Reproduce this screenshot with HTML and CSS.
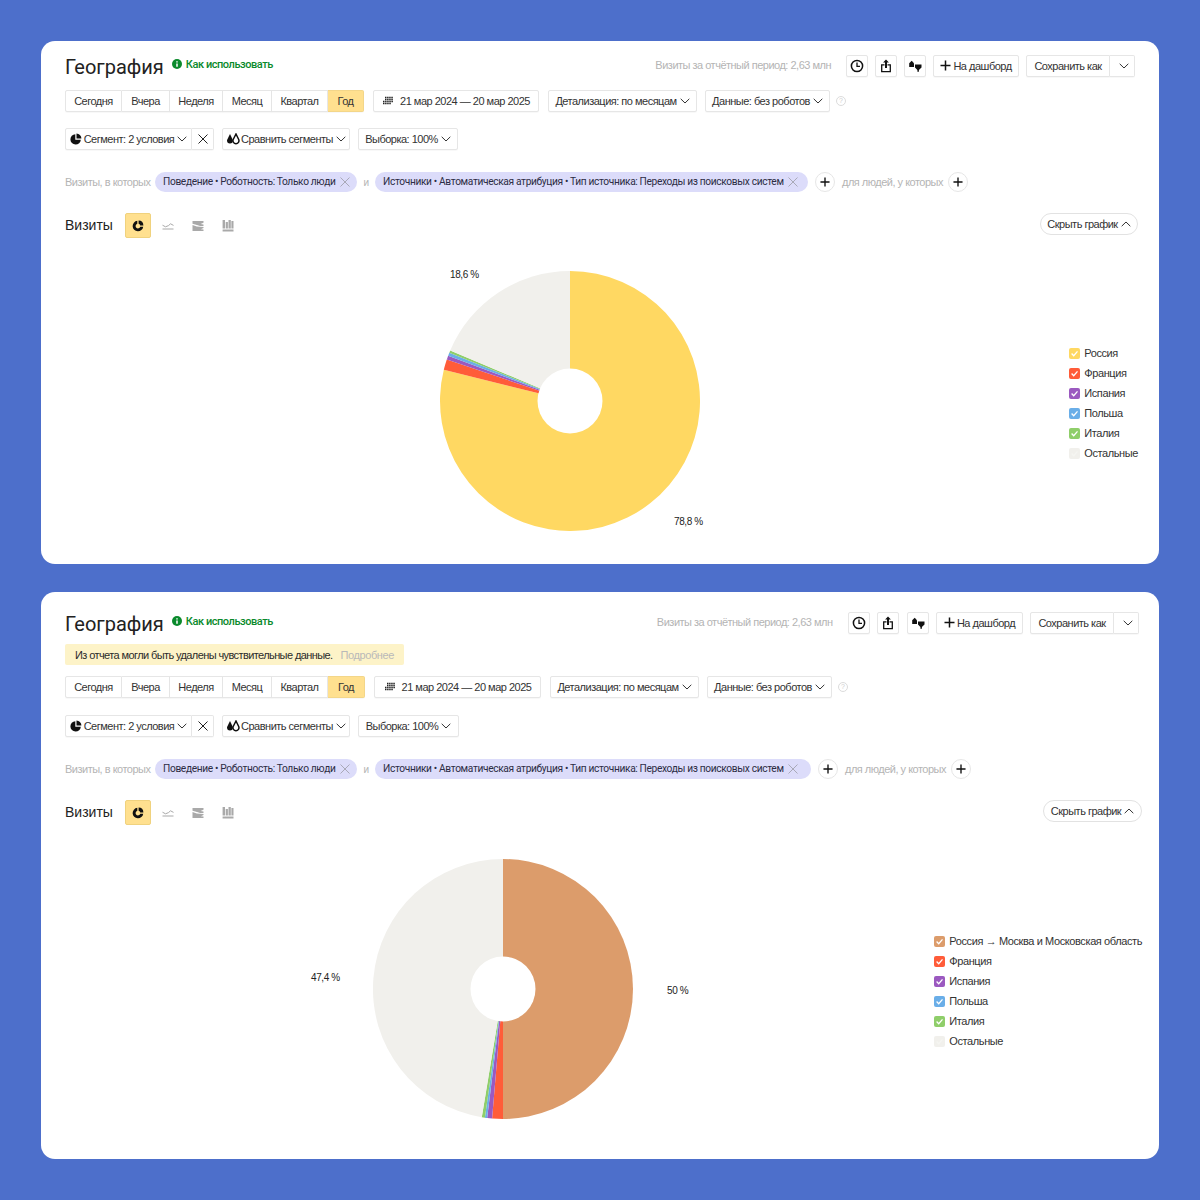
FILE: index.html
```html
<!DOCTYPE html>
<html lang="ru">
<head>
<meta charset="utf-8">
<title>География</title>
<link rel="stylesheet" href="styles.css">
</head>
<body>
<svg class="defs" width="0" height="0" aria-hidden="true">
  <defs>
    <symbol id="i-chev" viewBox="0 0 10 6"><path d="M.7.8 5 5 9.3.8" fill="none" stroke="currentColor" stroke-width="1"/></symbol>
    <symbol id="i-chevup" viewBox="0 0 10 6"><path d="M.7 5.2 5 1l4.3 4.2" fill="none" stroke="currentColor" stroke-width="1"/></symbol>
    <symbol id="i-x" viewBox="0 0 10 10"><path d="M.5.5l9 9M9.5.5l-9 9" fill="none" stroke="currentColor" stroke-width="1"/></symbol>
    <symbol id="i-plus" viewBox="0 0 11 11"><path d="M5.5.5v10M.5 5.5h10" fill="none" stroke="currentColor" stroke-width="1.5"/></symbol>
    <symbol id="i-clock" viewBox="0 0 14 14"><circle cx="7" cy="7" r="5.6" fill="none" stroke="currentColor" stroke-width="1.5"/><path d="M7 3.6V7.3h3" fill="none" stroke="currentColor" stroke-width="1.3"/></symbol>
    <symbol id="i-share" viewBox="0 0 14 14"><path d="M7 .6 9.9 3.6H8V9H6V3.6H4.100z" fill="currentColor"/><path d="M5.500 5.800H2.700v6.900h8.600V5.800H8.500" fill="none" stroke="currentColor" stroke-width="1.300"/></symbol>
    <symbol id="i-cmp" viewBox="0 0 14 14"><path d="M3.700 1.800 6 4.200V8H1.200V4.200z" fill="currentColor"/><path d="M7 5.500h6.500v3L10.900 11v1.800H9.400V11L7 8.500z" fill="currentColor"/></symbol>
    <symbol id="i-cal" viewBox="0 0 12 10"><path d="M3 1.500h8M3 3.500h8M1 5.500h10M1 7.500h8" stroke="currentColor" stroke-width="1.500" stroke-dasharray="1.500 .6" fill="none"/></symbol>
    <symbol id="i-seg" viewBox="0 0 12 12"><path d="M5.300 1.200v5.500h5.500A5.200 5.200 0 1 1 5.300 1.200z" fill="currentColor"/><path d="M6.500.6a5 5 0 0 1 4.900 4.900H6.500z" fill="currentColor"/></symbol>
    <symbol id="i-drops" viewBox="0 0 14 12"><path d="M4 1 6.600 6.500a2.900 2.900 0 1 1-5.300 0z" fill="currentColor"/><path d="M10 1l2.700 5.500a3 3 0 1 1-5.500 0z" fill="none" stroke="currentColor" stroke-width="1.500"/></symbol>
    <symbol id="i-pie" viewBox="0 0 12 12"><path d="M5.300.8v2.900a2.400 2.400 0 1 0 3 3h2.900A5.300 5.300 0 1 1 5.300.800z" fill="currentColor"/><path d="M6.600.6a5 5 0 0 1 4.800 4.800H8.200A2.200 2.200 0 0 0 6.600 3.800z" fill="currentColor"/></symbol>
    <symbol id="i-line" viewBox="0 0 12 8"><path d="M.5 3.200 3.500 4.800 6.500 3.600 8.500 1.800 11.500 3.400" fill="none" stroke="currentColor" stroke-width="1"/><path d="M.5 7h11" stroke="currentColor" stroke-width="1"/></symbol>
    <symbol id="i-area" viewBox="0 0 12 11"><path d="M.5.600h11v1.600L8.500 3.400l3 .7v1.500H8l-3-1.200L.5 3.200zM.5 4.500l4.300 1.500 6.700.4v1.200L8.800 8.800l2.700.3v1.400H.5z" fill="currentColor"/></symbol>
    <symbol id="i-bars" viewBox="0 0 12 12"><path d="M.6 0h2.400v8.500H.6zM3.700 2h2.200v6.500H3.700zM6.500 0h2.300v8.500H6.500zM9.400 1h2.100v7.500H9.400zM.6 9.500h10.900v2H.6z" fill="currentColor"/></symbol>
    <symbol id="i-tick" viewBox="0 0 11 11"><path d="M2.600 5.500 4.700 7.700 8.500 3.300" fill="none" stroke="currentColor" stroke-width="1.300"/></symbol>
  </defs>
</svg>

<main class="page">
  <section class="card card-a">
    <header class="head">
      <h1 class="title">География</h1>
      <a class="how"><svg class="how-ic" viewBox="0 0 10 10"><circle cx="5" cy="5" r="5" fill="#0a8a2c"/><path d="M5 2.200v1.300M5 4.500v3.300" stroke="#fff" stroke-width="1.500"/></svg>Как использовать</a>
      <div class="head-right">
        <span class="stat">Визиты за отчётный период: 2,63 млн</span>
        <button class="btn sq"><svg class="ic14"><use href="#i-clock"/></svg></button>
        <button class="btn sq"><svg class="ic14"><use href="#i-share"/></svg></button>
        <button class="btn sq"><svg class="ic14"><use href="#i-cmp"/></svg></button>
        <button class="btn dash"><svg class="ic11"><use href="#i-plus"/></svg>На дашборд</button>
        <div class="group save"><button class="btn save-main">Сохранить как</button><button class="btn save-more"><svg class="chev"><use href="#i-chev"/></svg></button></div>
      </div>
    </header>

    <div class="row row-period">
      <div class="group periods">
        <button class="btn p1">Сегодня</button><button class="btn p2">Вчера</button><button class="btn p3">Неделя</button><button class="btn p4">Месяц</button><button class="btn p5">Квартал</button><button class="btn p6 on">Год</button>
      </div>
      <button class="btn date"><svg class="cal"><use href="#i-cal"/></svg>21 мар 2024 — 20 мар 2025</button>
      <button class="btn detail">Детализация: по месяцам<svg class="chev"><use href="#i-chev"/></svg></button>
      <button class="btn data">Данные: без роботов<svg class="chev"><use href="#i-chev"/></svg></button>
      <span class="help">?</span>
    </div>

    <div class="row row-seg">
      <div class="group">
        <button class="btn seg"><svg class="ic12"><use href="#i-seg"/></svg>Сегмент: 2 условия<svg class="chev"><use href="#i-chev"/></svg></button><button class="btn seg-x"><svg class="ic10"><use href="#i-x"/></svg></button>
      </div>
      <button class="btn cmp"><svg class="drops"><use href="#i-drops"/></svg>Сравнить сегменты<svg class="chev"><use href="#i-chev"/></svg></button>
      <button class="btn sample">Выборка: 100%<svg class="chev"><use href="#i-chev"/></svg></button>
    </div>

    <div class="row row-pills">
      <span class="muted l1">Визиты, в которых</span>
      <span class="pill pill1">Поведение • Роботность: Только люди<svg class="ic10 px"><use href="#i-x"/></svg></span>
      <span class="muted and">и</span>
      <span class="pill pill2">Источники • Автоматическая атрибуция • Тип источника: Переходы из поисковых систем<svg class="ic10 px"><use href="#i-x"/></svg></span>
      <button class="round"><svg class="ic10b"><use href="#i-plus"/></svg></button>
      <span class="muted l2">для людей, у которых</span>
      <button class="round"><svg class="ic10b"><use href="#i-plus"/></svg></button>
    </div>

    <div class="row row-chart-head">
      <h2 class="sub">Визиты</h2>
      <button class="type on"><svg class="ic12"><use href="#i-pie"/></svg></button>
      <span class="type"><svg class="ic12"><use href="#i-line"/></svg></span>
      <span class="type"><svg class="ic12"><use href="#i-area"/></svg></span>
      <span class="type"><svg class="ic12"><use href="#i-bars"/></svg></span>
      <button class="hide">Скрыть график<svg class="chev"><use href="#i-chevup"/></svg></button>
    </div>

    <div class="chart">
      <div class="pie">
        <svg class="pie-svg" viewBox="0 0 260 260">
          <path fill="#ffd862" d="M130 130V0A130 130 0 1 1 3.81 98.77Z"/>
          <path fill="#ff5c39" d="M130 130L3.81 98.77A130 130 0 0 1 6.79 88.53Z"/>
          <path fill="#9b59c0" d="M130 130L6.79 88.53A130 130 0 0 1 8.15 84.68Z"/>
          <path fill="#6aaee8" d="M130 130L8.15 84.68A130 130 0 0 1 9.3 81.72Z"/>
          <path fill="#8fce6a" d="M130 130L9.3 81.72A130 130 0 0 1 10.24 79.42Z"/>
          <path fill="#f1f0ec" d="M130 130L10.24 79.42A130 130 0 0 1 130 0Z"/>
          <circle cx="130" cy="130" r="32.5" fill="#fff"/>
        </svg>
        <span class="val a-grey">18,6 %</span>
        <span class="val a-yellow">78,8 %</span>
      </div>
      <ul class="legend">
        <li><span class="sw c-yellow"><svg><use href="#i-tick"/></svg></span>Россия</li>
        <li><span class="sw c-red"><svg><use href="#i-tick"/></svg></span>Франция</li>
        <li><span class="sw c-purple"><svg><use href="#i-tick"/></svg></span>Испания</li>
        <li><span class="sw c-blue"><svg><use href="#i-tick"/></svg></span>Польша</li>
        <li><span class="sw c-green"><svg><use href="#i-tick"/></svg></span>Италия</li>
        <li><span class="sw c-grey"><svg><use href="#i-tick"/></svg></span>Остальные</li>
      </ul>
    </div>
  </section>

  <section class="card card-b">
    <header class="head">
      <h1 class="title">География</h1>
      <a class="how"><svg class="how-ic" viewBox="0 0 10 10"><circle cx="5" cy="5" r="5" fill="#0a8a2c"/><path d="M5 2.200v1.300M5 4.500v3.300" stroke="#fff" stroke-width="1.500"/></svg>Как использовать</a>
      <div class="head-right">
        <span class="stat">Визиты за отчётный период: 2,63 млн</span>
        <button class="btn sq"><svg class="ic14"><use href="#i-clock"/></svg></button>
        <button class="btn sq"><svg class="ic14"><use href="#i-share"/></svg></button>
        <button class="btn sq"><svg class="ic14"><use href="#i-cmp"/></svg></button>
        <button class="btn dash"><svg class="ic11"><use href="#i-plus"/></svg>На дашборд</button>
        <div class="group save"><button class="btn save-main">Сохранить как</button><button class="btn save-more"><svg class="chev"><use href="#i-chev"/></svg></button></div>
      </div>
    </header>

    <p class="notice">Из отчета могли быть удалены чувствительные данные.<a class="more">Подробнее</a></p>

    <div class="row row-period">
      <div class="group periods">
        <button class="btn p1">Сегодня</button><button class="btn p2">Вчера</button><button class="btn p3">Неделя</button><button class="btn p4">Месяц</button><button class="btn p5">Квартал</button><button class="btn p6 on">Год</button>
      </div>
      <button class="btn date"><svg class="cal"><use href="#i-cal"/></svg>21 мар 2024 — 20 мар 2025</button>
      <button class="btn detail">Детализация: по месяцам<svg class="chev"><use href="#i-chev"/></svg></button>
      <button class="btn data">Данные: без роботов<svg class="chev"><use href="#i-chev"/></svg></button>
      <span class="help">?</span>
    </div>

    <div class="row row-seg">
      <div class="group">
        <button class="btn seg"><svg class="ic12"><use href="#i-seg"/></svg>Сегмент: 2 условия<svg class="chev"><use href="#i-chev"/></svg></button><button class="btn seg-x"><svg class="ic10"><use href="#i-x"/></svg></button>
      </div>
      <button class="btn cmp"><svg class="drops"><use href="#i-drops"/></svg>Сравнить сегменты<svg class="chev"><use href="#i-chev"/></svg></button>
      <button class="btn sample">Выборка: 100%<svg class="chev"><use href="#i-chev"/></svg></button>
    </div>

    <div class="row row-pills">
      <span class="muted l1">Визиты, в которых</span>
      <span class="pill pill1">Поведение • Роботность: Только люди<svg class="ic10 px"><use href="#i-x"/></svg></span>
      <span class="muted and">и</span>
      <span class="pill pill2">Источники • Автоматическая атрибуция • Тип источника: Переходы из поисковых систем<svg class="ic10 px"><use href="#i-x"/></svg></span>
      <button class="round"><svg class="ic10b"><use href="#i-plus"/></svg></button>
      <span class="muted l2">для людей, у которых</span>
      <button class="round"><svg class="ic10b"><use href="#i-plus"/></svg></button>
    </div>

    <div class="row row-chart-head">
      <h2 class="sub">Визиты</h2>
      <button class="type on"><svg class="ic12"><use href="#i-pie"/></svg></button>
      <span class="type"><svg class="ic12"><use href="#i-line"/></svg></span>
      <span class="type"><svg class="ic12"><use href="#i-area"/></svg></span>
      <span class="type"><svg class="ic12"><use href="#i-bars"/></svg></span>
      <button class="hide">Скрыть график<svg class="chev"><use href="#i-chevup"/></svg></button>
    </div>

    <div class="chart">
      <div class="pie">
        <svg class="pie-svg" viewBox="0 0 260 260">
          <path fill="#dc9c6b" d="M130 130V0A130 130 0 0 1 130 260Z"/>
          <path fill="#ff5c39" d="M130 130V260A130 130 0 0 1 119.12 259.54Z"/>
          <path fill="#9b59c0" d="M130 130L119.12 259.54A130 130 0 0 1 114.16 259.03Z"/>
          <path fill="#6aaee8" d="M130 130L114.16 259.03A130 130 0 0 1 111.91 258.74Z"/>
          <path fill="#8fce6a" d="M130 130L111.91 258.74A130 130 0 0 1 108.77 258.26Z"/>
          <path fill="#f1f0ec" d="M130 130L108.77 258.26A130 130 0 0 1 130 0Z"/>
          <circle cx="130" cy="130" r="32.5" fill="#fff"/>
        </svg>
        <span class="val b-grey">47,4 %</span>
        <span class="val b-orange">50 %</span>
      </div>
      <ul class="legend">
        <li><span class="sw c-orange"><svg><use href="#i-tick"/></svg></span>Россия → Москва и Московская область</li>
        <li><span class="sw c-red"><svg><use href="#i-tick"/></svg></span>Франция</li>
        <li><span class="sw c-purple"><svg><use href="#i-tick"/></svg></span>Испания</li>
        <li><span class="sw c-blue"><svg><use href="#i-tick"/></svg></span>Польша</li>
        <li><span class="sw c-green"><svg><use href="#i-tick"/></svg></span>Италия</li>
        <li><span class="sw c-grey"><svg><use href="#i-tick"/></svg></span>Остальные</li>
      </ul>
    </div>
  </section>
</main>
</body>
</html>
```

FILE: styles.css
```css
* { box-sizing: border-box; }
html, body { margin: 0; padding: 0; }
body {
  background: #4d6fcb;
  font-family: "Liberation Sans", Arial, sans-serif;
  font-size: 11px;
  letter-spacing: -0.5px;
  color: #2b2b2b;
}
.defs { position: absolute; }
.page {
  display: flex;
  flex-direction: column;
  gap: 28px;
  padding: 41px 41px 0;
}
.card {
  background: #fff;
  border-radius: 14px;
  padding: 0 0 0 24px;
}
.card-a { height: 523px; padding-top: 14px; }
.card-b { height: 567px; padding-top: 20px; }

/* header */
.head { display: flex; align-items: center; height: 22px; padding-right: 24px; }
.card-b .head { padding-right: 20px; }
.title {
  margin: 0;
  font: 400 20px/26px Roboto, sans-serif;
  letter-spacing: 0;
  color: #222;
  position: relative;
  top: 1px;
}
.how { display: flex; align-items: center; margin-left: 8px; color: #0a8a2c; font: 500 11px/14px Roboto, sans-serif; letter-spacing: -0.45px; position: relative; top: -1px; }
.how-ic { width: 10px; height: 10px; margin-right: 4px; position: relative; top: -1px; }
.head-right { display: flex; align-items: center; margin-left: auto; }
.stat { color: #b4b4b4; margin-right: 15px; position: relative; top: -1px; }
.btn {
  display: inline-flex;
  align-items: center;
  justify-content: center;
  height: 22px;
  padding: 0 0 1px;
  margin: 0;
  background: #fff;
  border: 1px solid #e6e6e6;
  border-radius: 2px;
  font: inherit;
  letter-spacing: inherit;
  color: #333;
  box-shadow: 0 1px 1px rgba(0,0,0,.03);
  white-space: nowrap;
}
.sq { width: 22px; margin-right: 7px; }
.card-b .sq { margin-right: 7.5px; }
.dash { width: 86px; margin-right: 7px; }
.card-b .dash { width: 87px; }
.group { display: inline-flex; }
.group .btn { border-radius: 0; border-left-width: 0; }
.group .btn:first-child { border-left-width: 1px; border-radius: 2px 0 0 2px; }
.group .btn:last-child { border-radius: 0 2px 2px 0; }
.save-main { width: 84px; }
.save-more { width: 25px; }
.dash svg { margin-right: 2px; }

/* rows */
.row { display: flex; align-items: center; }
.row-period { height: 22px; margin-top: 13px; }
.row-seg { height: 22px; margin-top: 16px; }
.row-pills { height: 20px; margin-top: 22px; }
.row-chart-head { height: 25px; margin-top: 21px; padding-right: 21px; }
.card-b .row-period { margin-top: 11px; }
.card-b .row-seg { margin-top: 17px; }
.card-b .row-chart-head { padding-right: 17px; }

.notice {
  display: inline-flex;
  align-items: center;
  height: 21px;
  margin: 10px 0 0;
  padding: 0 10px;
  background: #fdf3c8;
  border-radius: 2px;
  color: #2b2b2b;
  letter-spacing: -0.6px;
}
.more { margin-left: 8px; color: #b9b9b9; letter-spacing: -0.4px; }

.p1 { width: 57px; }
.p2 { width: 48px; }
.p3 { width: 53px; }
.p4 { width: 49px; }
.p5 { width: 56px; }
.p6 { width: 36px; }
.btn.on { background: #ffe08f; border-color: #f3d689; }
.date { width: 166px; margin-left: 9px; }
.detail { width: 149px; margin-left: 9px; }
.data { width: 125px; margin-left: 8px; }
.card-b .p6 { width: 37px; }
.card-b .date { width: 167px; }
.chev { width: 10px; height: 6px; margin-left: 3px; flex: none; }
.cal { width: 12px; height: 10px; margin-right: 6px; color: #222; }
.help {
  width: 10px; height: 10px;
  margin-left: 6px;
  border: 1px solid #dcdcdc;
  border-radius: 50%;
  color: #cfcfcf;
  font-size: 7px;
  line-height: 8px;
  text-align: center;
  letter-spacing: 0;
}
.seg { width: 127px; }
.seg-x { width: 22px; }
.seg-x svg { color: #222; }
.ic12 { width: 12px; height: 12px; flex: none; color: #111; }
.ic14 { width: 14px; height: 14px; color: #111; }
.ic11 { width: 11px; height: 11px; color: #111; }
.ic10 { width: 10px; height: 10px; }
.ic10b { width: 10px; height: 10px; color: #111; }
.seg .ic12 { margin-right: 2px; }
.drops { width: 14px; height: 12px; margin-right: 1px; color: #111; }
.cmp { width: 128px; margin-left: 8px; }
.sample { width: 100px; margin-left: 8px; }
.card-b .sample { width: 101px; }

/* pills */
.muted { color: #b4b4b4; white-space: nowrap; }
.l1 { width: 90px; }
.and { width: 18px; text-align: center; font-size: 10px; }
.pill {
  display: inline-flex;
  align-items: center;
  height: 20px;
  padding: 0 0 0 8px;
  background: #dcdcfa;
  border-radius: 10px;
  font: 400 10.2px/20px Roboto, sans-serif;
  letter-spacing: -0.35px;
  color: #2c2c44;
  white-space: nowrap;
}
.pill1 { width: 202px; }
.pill2 { width: 433px; }
.card-b .pill2 { width: 436px; }
.px { margin-left: 4px; color: #a9a9b8; flex: none; }
.round {
  display: inline-flex;
  align-items: center;
  justify-content: center;
  width: 20px; height: 20px;
  padding: 0;
  background: #fff;
  border: 1px solid #e6e6e6;
  border-radius: 50%;
  margin-left: 7px;
  flex: none;
}
.l2 { margin-left: 7px; width: 99px; }
.l2 + .round { margin-left: 7px; }

/* chart head */
.sub { margin: 0; width: 60px; font: 400 14px/25px "Liberation Sans", sans-serif; color: #222; letter-spacing: 0; }
.type {
  display: inline-flex;
  align-items: center;
  justify-content: center;
  width: 26px; height: 25px;
  margin-right: 4px;
  padding: 0;
  background: none;
  border: 0;
  color: #aaa;
}
.type .ic12 { color: #a9a9a9; }
.type.on { background: #ffe08f; border: 1px solid #f0d27e; border-radius: 2px; }
.type.on .ic12 { color: #111; }
.hide {
  display: inline-flex;
  align-items: center;
  justify-content: center;
  margin-left: auto;
  align-self: flex-start;
  width: 98px; height: 22px;
  padding: 0 0 1px;
  background: #fff;
  border: 1px solid #e2e2e2;
  border-radius: 11px;
  font: inherit;
  letter-spacing: inherit;
  color: #333;
}
.card-b .hide { width: 99px; }

/* chart */
.chart { display: flex; align-items: center; height: 300px; margin-top: 13px; }
.card-a .chart { padding-right: 21px; }
.card-b .chart { padding-right: 17px; margin-top: 14px; }
.pie { position: relative; width: 260px; height: 260px; flex: none; }
.card-a .pie { margin-left: 374.5px; }
.card-b .pie { margin-left: 308px; }
.pie-svg { display: block; width: 260px; height: 260px; }
.val { position: absolute; font-size: 10px; color: #222; letter-spacing: -0.4px; white-space: nowrap; }
.a-grey { left: 10.5px; top: -2px; }
.a-yellow { left: 234.5px; top: 245px; }
.b-grey { left: -62px; top: 113px; }
.b-orange { left: 294px; top: 126px; }
.legend { list-style: none; margin: 4px 0 0 auto; padding: 0; display: flex; flex-direction: column; }
.legend li { display: flex; align-items: center; height: 20px; color: #333; white-space: nowrap; letter-spacing: -0.4px; }
.sw { width: 11px; height: 11px; margin-right: 4px; border-radius: 2px; color: #fff; flex: none; }
.sw svg { display: block; width: 11px; height: 11px; }
.c-yellow { background: #ffd862; }
.c-red { background: #ff5c39; }
.c-purple { background: #9b59c0; }
.c-blue { background: #6aaee8; }
.c-green { background: #8fce6a; }
.c-orange { background: #dc9c6b; }
.c-grey { background: #f1f0ec; color: #f5f5f2; }
```
